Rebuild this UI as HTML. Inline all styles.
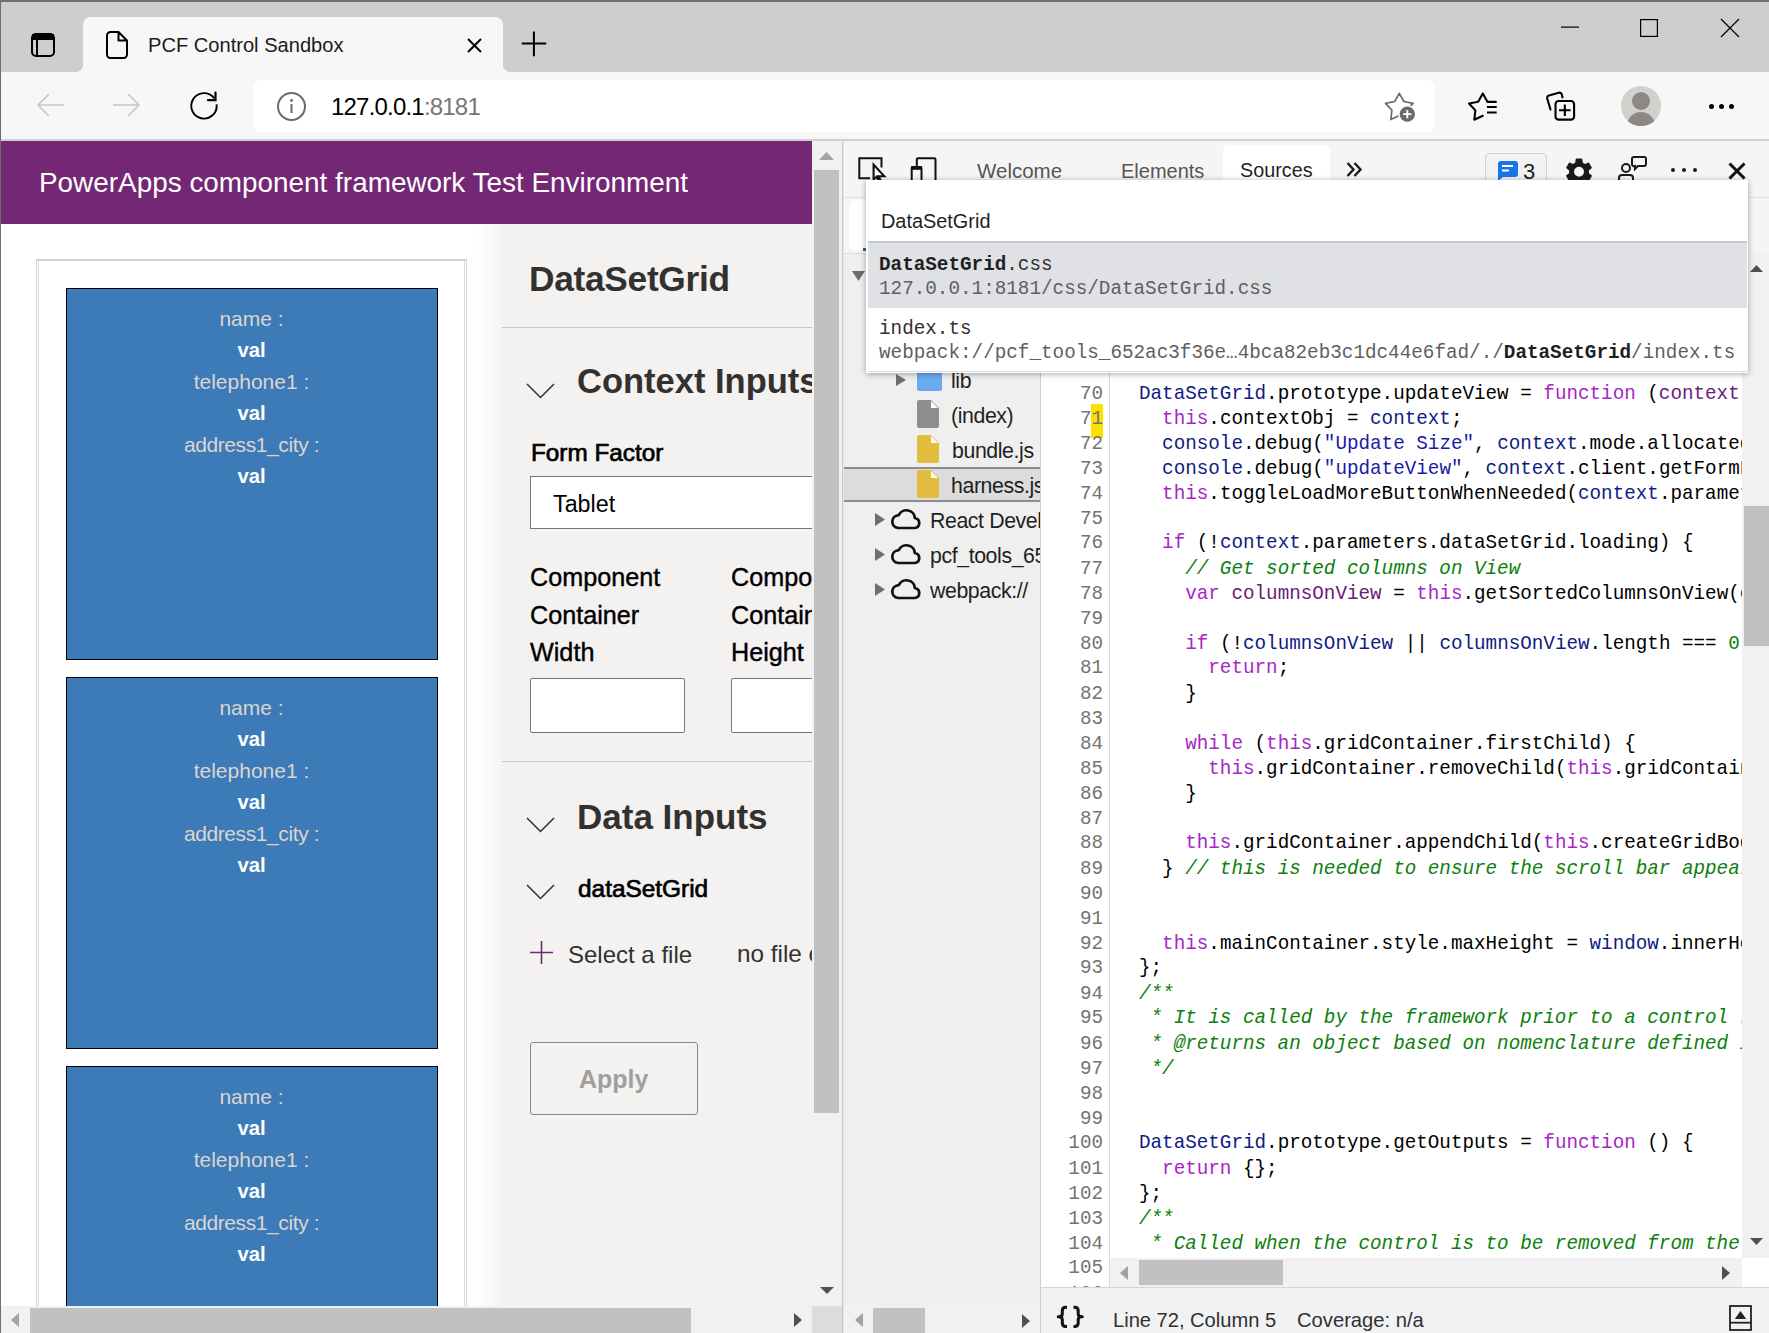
<!DOCTYPE html>
<html><head><meta charset="utf-8">
<style>
*{box-sizing:border-box;margin:0;padding:0}
html,body{width:1769px;height:1333px;overflow:hidden;background:#cecece;font-family:"Liberation Sans",sans-serif}
.a{position:absolute}
.t{position:absolute;white-space:pre;line-height:1}
svg{position:absolute;overflow:visible}
</style></head><body>
<!-- window border -->
<div class="a" style="left:0;top:0;width:1769px;height:2px;background:#6f6f6f;z-index:50"></div>
<div class="a" style="left:0;top:0;width:1px;height:1333px;background:#6f6f6f;z-index:50"></div>

<!-- ===== TAB STRIP ===== -->
<div id="tabstrip" class="a" style="left:0;top:0;width:1769px;height:72px;background:#cecece"></div>
<!-- sidebar icon -->
<svg style="left:31px;top:33px" width="24" height="24" viewBox="0 0 24 24"><rect x="1" y="1" width="22" height="22" rx="4" fill="none" stroke="#000" stroke-width="2"/><rect x="1" y="1" width="22" height="6" fill="#000"/><line x1="6" y1="6" x2="6" y2="23" stroke="#000" stroke-width="2"/></svg>
<!-- active tab -->
<div class="a" style="left:83px;top:17px;width:420px;height:55px;background:#f7f7f7;border-radius:8px 8px 0 0"></div>
<div class="a" style="left:75px;top:64px;width:8px;height:8px;background:radial-gradient(circle at 0 0,transparent 8px,#f7f7f7 8.5px)"></div>
<div class="a" style="left:503px;top:64px;width:8px;height:8px;background:radial-gradient(circle at 100% 0,transparent 8px,#f7f7f7 8.5px)"></div>
<!-- file icon -->
<svg style="left:106px;top:31px" width="22" height="28" viewBox="0 0 22 28"><path d="M4 1 H12.5 L21 9.5 V23.5 A3.5 3.5 0 0 1 17.5 27 H4.5 A3.5 3.5 0 0 1 1 23.5 V4.5 A3.5 3.5 0 0 1 4.5 1 Z M12.5 1 V9.5 H21" fill="none" stroke="#000" stroke-width="2" stroke-linejoin="round"/></svg>
<div class="t" style="left:148px;top:35px;font-size:20.1px;color:#1b1b1b">PCF Control Sandbox</div>
<svg style="left:467px;top:38px" width="15" height="15" viewBox="0 0 15 15"><path d="M1 1 L14 14 M14 1 L1 14" stroke="#000" stroke-width="2"/></svg>
<svg style="left:521px;top:31px" width="26" height="26" viewBox="0 0 26 26"><path d="M12.9 0.5 V25.3 M0.8 12.6 H25.2" stroke="#000" stroke-width="2"/></svg>
<!-- window controls -->
<svg style="left:1561px;top:26px" width="18" height="2"><rect x="0" y="0.5" width="18" height="1.2" fill="#000"/></svg>
<svg style="left:1640px;top:19px" width="18" height="18" viewBox="0 0 18 18"><rect x="0.6" y="0.6" width="16.8" height="16.8" fill="none" stroke="#000" stroke-width="1.2"/></svg>
<svg style="left:1721px;top:19px" width="18" height="18" viewBox="0 0 18 18"><path d="M0 0 L18 18 M18 0 L0 18" stroke="#000" stroke-width="1.2"/></svg>

<!-- ===== TOOLBAR ===== -->
<div class="a" style="left:0;top:72px;width:1769px;height:68px;background:#f7f7f7;border-bottom:1px solid #d2d2d2"></div>
<svg style="left:36px;top:93px" width="28" height="24" viewBox="0 0 28 24"><path d="M13 1 L2 12 L13 23 M2 12 H28" fill="none" stroke="#c6c6c6" stroke-width="1.6"/></svg>
<svg style="left:113px;top:93px" width="28" height="24" viewBox="0 0 28 24"><path d="M15 1 L26 12 L15 23 M26 12 H0" fill="none" stroke="#c6c6c6" stroke-width="1.6"/></svg>
<svg style="left:189px;top:91px" width="30" height="30" viewBox="0 0 30 30"><path d="M25.2 7.3 A12.7 12.7 0 1 0 27.6 13.3" fill="none" stroke="#000" stroke-width="1.9"/><path d="M26.5 1.5 V9.2 H19" fill="none" stroke="#000" stroke-width="2.2" stroke-linecap="round"/></svg>
<div class="a" style="left:253px;top:80px;width:1182px;height:52px;background:#fff;border-radius:7px"></div>
<svg style="left:277px;top:92px" width="29" height="29" viewBox="0 0 29 29"><circle cx="14.5" cy="14.5" r="13.5" fill="none" stroke="#6b6b6b" stroke-width="2"/><rect x="13.5" y="12" width="2" height="9" fill="#6b6b6b"/><circle cx="14.5" cy="8.5" r="1.4" fill="#6b6b6b"/></svg>
<div class="t" style="left:331px;top:95px;font-size:24px;letter-spacing:-0.8px;color:#000">127.0.0.1<span style="color:#767676">:8181</span></div>
<!-- star add -->
<svg style="left:1383px;top:91px" width="34" height="34" viewBox="0 0 34 34"><path d="M16.3 2.3 L20.9 10.5 L30.1 12.3 L23.7 19.2 L24.8 28.5 L16.3 24.6 L7.8 28.5 L8.9 19.2 L2.5 12.3 L11.7 10.5 Z" fill="none" stroke="#6b6b6b" stroke-width="1.7" stroke-linejoin="round"/><circle cx="24.3" cy="23.1" r="9.2" fill="#fff"/><circle cx="24.3" cy="23.1" r="7.7" fill="#6b6b6b"/><path d="M24.3 19 V27.2 M20.2 23.1 H28.4" stroke="#fff" stroke-width="1.9"/></svg>
<!-- favorites -->
<svg style="left:1467px;top:91px" width="32" height="32" viewBox="0 0 32 32"><path d="M20.4 10.7 L15.8 2.5 L11.2 10.7 L2.0 12.5 L8.4 19.4 L7.3 28.7 L15.8 24.8" fill="none" stroke="#000" stroke-width="2.1" stroke-linejoin="round" stroke-linecap="round"/><path d="M20 10.9 H29.7 M20 16 H29.7 M20 21.5 H29.7" stroke="#000" stroke-width="2.1"/></svg>
<!-- collections -->
<svg style="left:1545px;top:91px" width="32" height="32" viewBox="0 0 32 32"><path d="M5.5 18.5 L2.2 7.5 A2.5 2.5 0 0 1 4 4.4 L13.8 1.8 A2.5 2.5 0 0 1 16.8 3.6 L17.5 6.5" fill="none" stroke="#000" stroke-width="2.1" stroke-linecap="round"/><rect x="10.5" y="10" width="18.6" height="18.6" rx="3.2" fill="none" stroke="#000" stroke-width="2.1"/><path d="M19.8 13.5 V25.1 M14 19.3 H25.6" stroke="#000" stroke-width="2.1"/></svg>
<!-- avatar -->
<div class="a" style="left:1621px;top:86px;width:40px;height:40px;border-radius:50%;background:#d3d1ce;overflow:hidden">
 <div class="a" style="left:11px;top:6px;width:18px;height:18px;border-radius:50%;background:#8c8985"></div>
 <div class="a" style="left:6px;top:26px;width:28px;height:20px;border-radius:14px 14px 0 0;background:#8c8985"></div>
</div>
<div class="a" style="left:1709px;top:104px;width:5px;height:5px;border-radius:50%;background:#000"></div>
<div class="a" style="left:1719px;top:104px;width:5px;height:5px;border-radius:50%;background:#000"></div>
<div class="a" style="left:1729px;top:104px;width:5px;height:5px;border-radius:50%;background:#000"></div>

<!-- PAGE_START -->
<div class="a" style="left:1px;top:141px;width:811px;height:1165px;background:#fff;overflow:hidden">
 <div class="a" style="left:0;top:0;width:811px;height:83px;background:#742774"></div>
 <div class="t" style="left:38px;top:28px;font-size:27.9px;color:#fff">PowerApps component framework Test Environment</div>
 <!-- outer container -->
 <div class="a" style="left:35px;top:118px;width:431px;height:1200px;border:1px solid #d4d4d4;border-top-width:2px;border-bottom:0"></div>
 <div class="a" style="left:37px;top:120px;width:427px;height:1200px;border:1px solid #dcdcdc;border-top:0;border-bottom:0"></div>
 <div class="a" style="left:65px;top:147px;width:372px;height:372px;background:#3d7ab8;border:1.5px solid #000;text-align:center;color:#dad6cf;font-size:21px">
  <div class="t" style="left:0;width:369px;top:19px">name :</div>
  <div class="t" style="left:0;width:369px;top:51px;color:#fff;font-weight:700;font-size:20.3px">val</div>
  <div class="t" style="left:0;width:369px;top:82px">telephone1 :</div>
  <div class="t" style="left:0;width:369px;top:114px;color:#fff;font-weight:700;font-size:20.3px">val</div>
  <div class="t" style="left:0;width:369px;top:145px;letter-spacing:-0.4px">address1_city :</div>
  <div class="t" style="left:0;width:369px;top:177px;color:#fff;font-weight:700;font-size:20.3px">val</div>
 </div>
<div class="a" style="left:65px;top:536px;width:372px;height:372px;background:#3d7ab8;border:1.5px solid #000;text-align:center;color:#dad6cf;font-size:21px">
  <div class="t" style="left:0;width:369px;top:19px">name :</div>
  <div class="t" style="left:0;width:369px;top:51px;color:#fff;font-weight:700;font-size:20.3px">val</div>
  <div class="t" style="left:0;width:369px;top:82px">telephone1 :</div>
  <div class="t" style="left:0;width:369px;top:114px;color:#fff;font-weight:700;font-size:20.3px">val</div>
  <div class="t" style="left:0;width:369px;top:145px;letter-spacing:-0.4px">address1_city :</div>
  <div class="t" style="left:0;width:369px;top:177px;color:#fff;font-weight:700;font-size:20.3px">val</div>
 </div>
<div class="a" style="left:65px;top:925px;width:372px;height:372px;background:#3d7ab8;border:1.5px solid #000;text-align:center;color:#dad6cf;font-size:21px">
  <div class="t" style="left:0;width:369px;top:19px">name :</div>
  <div class="t" style="left:0;width:369px;top:51px;color:#fff;font-weight:700;font-size:20.3px">val</div>
  <div class="t" style="left:0;width:369px;top:82px">telephone1 :</div>
  <div class="t" style="left:0;width:369px;top:114px;color:#fff;font-weight:700;font-size:20.3px">val</div>
  <div class="t" style="left:0;width:369px;top:145px;letter-spacing:-0.4px">address1_city :</div>
  <div class="t" style="left:0;width:369px;top:177px;color:#fff;font-weight:700;font-size:20.3px">val</div>
 </div>
<div class="a" style="left:65px;top:1313px;width:372px;height:372px;background:#3d7ab8;border:1.5px solid #000;text-align:center;color:#dad6cf;font-size:21px">
  <div class="t" style="left:0;width:369px;top:19px">name :</div>
  <div class="t" style="left:0;width:369px;top:51px;color:#fff;font-weight:700;font-size:20.3px">val</div>
  <div class="t" style="left:0;width:369px;top:82px">telephone1 :</div>
  <div class="t" style="left:0;width:369px;top:114px;color:#fff;font-weight:700;font-size:20.3px">val</div>
  <div class="t" style="left:0;width:369px;top:145px;letter-spacing:-0.4px">address1_city :</div>
  <div class="t" style="left:0;width:369px;top:177px;color:#fff;font-weight:700;font-size:20.3px">val</div>
 </div>

 <!-- right panel -->
 <div class="a" style="left:473px;top:83px;width:29px;height:1082px;background:linear-gradient(to right,rgba(0,0,0,0),rgba(0,0,0,0.045))"></div>
 <div class="a" style="left:501px;top:83px;width:310px;height:1082px;background:#f3f2f1"></div>
 <div class="t" style="left:528px;top:120px;font-size:35.3px;font-weight:700;color:#323130;letter-spacing:-0.3px">DataSetGrid</div>
 <div class="a" style="left:501px;top:186px;width:310px;height:1px;background:#c8c6c4"></div>
 <svg style="left:525px;top:242px" width="29" height="16" viewBox="0 0 29 16"><path d="M1 1 L14.5 14.5 L28 1" fill="none" stroke="#323130" stroke-width="1.5"/></svg>
 <div class="t" style="left:576px;top:223px;font-size:34.5px;font-weight:700;color:#323130">Context Inputs</div>
 <div class="t" style="left:530px;top:300px;font-size:24.3px;color:#000;-webkit-text-stroke:0.7px #000">Form Factor</div>
 <div class="a" style="left:529px;top:335px;width:300px;height:53px;background:#fff;border:1px solid #767676"></div>
 <div class="t" style="left:552px;top:352px;font-size:23.3px;color:#000">Tablet</div>
 <div class="a" style="left:529px;top:418px;font-size:25.2px;line-height:37.7px;color:#000;white-space:pre;-webkit-text-stroke:0.4px #000">Component
Container
Width</div>
 <div class="a" style="left:730px;top:418px;font-size:25.2px;line-height:37.7px;color:#000;white-space:pre;-webkit-text-stroke:0.4px #000">Component
Container
Height</div>
 <div class="a" style="left:529px;top:537px;width:155px;height:55px;background:#fff;border:1px solid #767676;border-radius:2px"></div>
 <div class="a" style="left:730px;top:537px;width:155px;height:55px;background:#fff;border:1px solid #767676;border-radius:2px"></div>
 <div class="a" style="left:501px;top:620px;width:310px;height:1px;background:#c8c6c4"></div>
 <svg style="left:525px;top:676px" width="29" height="16" viewBox="0 0 29 16"><path d="M1 1 L14.5 14.5 L28 1" fill="none" stroke="#323130" stroke-width="1.5"/></svg>
 <div class="t" style="left:576px;top:658px;font-size:35px;font-weight:700;color:#323130">Data Inputs</div>
 <svg style="left:525px;top:743px" width="29" height="16" viewBox="0 0 29 16"><path d="M1 1 L14.5 14.5 L28 1" fill="none" stroke="#323130" stroke-width="1.5"/></svg>
 <div class="t" style="left:577px;top:736px;font-size:24.4px;color:#000;-webkit-text-stroke:0.7px #000">dataSetGrid</div>
 <svg style="left:529px;top:800px" width="23" height="23" viewBox="0 0 23 23"><path d="M11.5 0 V23 M0 11.5 H23" stroke="#742774" stroke-width="1.6"/></svg>
 <div class="t" style="left:567px;top:802px;font-size:24px;color:#323130">Select a file</div>
 <div class="t" style="left:736px;top:801px;font-size:24.3px;color:#323130">no file chosen</div>
 <div class="a" style="left:529px;top:901px;width:168px;height:73px;border:1.5px solid #8a8886;border-radius:3px"></div>
 <div class="t" style="left:578px;top:926px;font-size:25px;font-weight:700;color:#a19f9d">Apply</div>
</div>
<!-- page v scrollbar -->
<div class="a" style="left:812px;top:141px;width:30px;height:1165px;background:#f1f1f1"></div>
<div class="a" style="left:814px;top:170px;width:25px;height:943px;background:#c1c1c1"></div>
<svg style="left:819px;top:152px" width="15" height="8" viewBox="0 0 15 8"><path d="M0 8 L7.5 0 L15 8 Z" fill="#a3a3a3"/></svg>
<svg style="left:820px;top:1287px" width="14" height="7" viewBox="0 0 14 7"><path d="M0 0 L7 7 L14 0 Z" fill="#505050"/></svg>
<!-- page h scrollbar -->
<div class="a" style="left:1px;top:1306px;width:811px;height:27px;background:#f1f1f1"></div>
<div class="a" style="left:30px;top:1308px;width:661px;height:25px;background:#c1c1c1"></div>
<svg style="left:11px;top:1313px" width="8" height="14" viewBox="0 0 8 14"><path d="M8 0 L0 7 L8 14 Z" fill="#a3a3a3"/></svg>
<svg style="left:794px;top:1313px" width="8" height="14" viewBox="0 0 8 14"><path d="M0 0 L8 7 L0 14 Z" fill="#505050"/></svg>
<div class="a" style="left:812px;top:1306px;width:30px;height:27px;background:#dcdcdc"></div>
<!-- PAGE_END -->

<!-- DEVTOOLS_START -->
<style>
.cl{height:23.585px;line-height:23.585px;white-space:pre}
.code{font-family:"Liberation Mono",monospace;font-size:19.25px}
.k{color:#a626c8} .v{color:#0e1c84} .d{color:#6c1a78} .s{color:#1a1aa6} .c{color:#0b800b;font-style:italic} .n{color:#0b7d0b} .p{color:#000}
.nv{font-family:"Liberation Sans",sans-serif;font-size:21.3px;color:#1f1f1f;letter-spacing:-0.4px}
</style>
<div class="a" style="left:842px;top:141px;width:927px;height:1192px;background:#f5f5f5"></div>
<div class="a" style="left:842px;top:141px;width:1px;height:1192px;background:#c4c7cc"></div><div class="a" style="left:843px;top:141px;width:1px;height:1192px;background:#e6e6e6"></div>
<!-- main toolbar -->
<div class="a" style="left:844px;top:197px;width:925px;height:1px;background:#e2e2e2"></div>
<div class="a" style="left:1223px;top:145px;width:107px;height:52px;background:#fff;border-radius:6px 6px 0 0"></div>
<svg style="left:857px;top:156px" width="30" height="30" viewBox="0 0 30 30"><path d="M13 22.3 H2.3 V2.3 H24.5 V11.5" fill="none" stroke="#111" stroke-width="2"/><path d="M16.6 8.6 V23.5 L19.6 20.8 L21.8 25.2 L23.6 24.3 L21.5 20.2 L27.3 20.2 Z" fill="#fff" stroke="#111" stroke-width="2.1" stroke-miterlimit="10"/></svg>
<svg style="left:909px;top:156px" width="30" height="30" viewBox="0 0 30 30"><path d="M7.8 10 V3.5 Q7.8 2.3 9 2.3 H25.3 Q26.5 2.3 26.5 3.5 V26" fill="none" stroke="#111" stroke-width="2"/><path d="M2.7 26 V12.3 Q2.7 11.1 3.9 11.1 H11.3 Q12.5 11.1 12.5 12.3 V26" fill="none" stroke="#111" stroke-width="2"/><rect x="2" y="10.3" width="11" height="3.5" fill="#111"/></svg>
<div class="t" style="left:977px;top:161px;font-size:20.5px;color:#555">Welcome</div>
<div class="t" style="left:1121px;top:161px;font-size:20px;color:#555">Elements</div>
<div class="t" style="left:1240px;top:161px;font-size:19.8px;color:#1f1f1f">Sources</div>
<svg style="left:1346px;top:162px" width="16" height="15" viewBox="0 0 16 15"><path d="M1.5 1 L7.5 7.5 L1.5 14 M8.5 1 L14.5 7.5 L8.5 14" fill="none" stroke="#1a1a1a" stroke-width="2.4"/></svg>
<div class="a" style="left:1485px;top:153px;width:62px;height:50px;background:#f1f2f4;border:1px solid #d2d2d6;border-radius:4px"></div>
<svg style="left:1498px;top:161px" width="20" height="20" viewBox="0 0 20 20"><path d="M3 0 H17 A3 3 0 0 1 20 3 V13 A3 3 0 0 1 17 16 H5 L0 20 V3 A3 3 0 0 1 3 0 Z" fill="#1a73e8"/><rect x="4" y="4" width="11" height="2" fill="#fff"/><rect x="4" y="8.5" width="7" height="2" fill="#fff"/></svg>
<div class="t" style="left:1523px;top:161px;font-size:22px;color:#222">3</div>
<svg style="left:1566px;top:158px" width="26" height="27" viewBox="2.6 2 18.8 19.5"><path fill="#1a1a1a" d="M19.14 12.94c.04-.3.06-.61.06-.94 0-.32-.02-.64-.07-.94l2.03-1.58a.49.49 0 0 0 .12-.61l-1.92-3.32a.49.49 0 0 0-.59-.22l-2.39.96c-.5-.38-1.03-.7-1.62-.94l-.36-2.54a.48.48 0 0 0-.48-.41h-3.84c-.24 0-.43.17-.47.41l-.36 2.54c-.59.24-1.13.57-1.62.94l-2.39-.96a.49.49 0 0 0-.59.22L2.74 8.87c-.12.21-.08.47.12.61l2.03 1.58c-.05.3-.09.63-.09.94s.02.64.07.94l-2.03 1.58a.49.49 0 0 0-.12.61l1.92 3.32c.12.22.37.29.59.22l2.39-.96c.5.38 1.03.7 1.62.94l.36 2.54c.05.24.24.41.48.41h3.84c.24 0 .44-.17.47-.41l.36-2.54c.59-.24 1.13-.56 1.62-.94l2.39.96c.22.08.47 0 .59-.22l1.92-3.32c.12-.22.07-.47-.12-.61l-2.01-1.58zM12 15.6A3.6 3.6 0 1 1 12 8.4a3.6 3.6 0 0 1 0 7.2z"/></svg>
<svg style="left:1618px;top:156px" width="29" height="28" viewBox="0 0 29 28"><circle cx="8" cy="12" r="4" fill="none" stroke="#1a1a1a" stroke-width="2"/><path d="M1 27 V22 A3 3 0 0 1 4 19 H12 A3 3 0 0 1 15 22 V27" fill="none" stroke="#1a1a1a" stroke-width="2"/><path d="M16 1 H26 A2 2 0 0 1 28 3 V8 A2 2 0 0 1 26 10 H20 L17 13 V10 A2 2 0 0 1 14 8 V3 A2 2 0 0 1 16 1 Z" fill="none" stroke="#1a1a1a" stroke-width="2"/></svg>
<div class="a" style="left:1670.5px;top:167.7px;width:4.4px;height:4.4px;border-radius:50%;background:#1a1a1a"></div>
<div class="a" style="left:1681.6px;top:167.7px;width:4.4px;height:4.4px;border-radius:50%;background:#1a1a1a"></div>
<div class="a" style="left:1692.8px;top:167.7px;width:4.4px;height:4.4px;border-radius:50%;background:#1a1a1a"></div>
<svg style="left:1728px;top:163px" width="18" height="16" viewBox="0 0 18 16"><path d="M1.5 0.5 L16.5 15.5 M16.5 0.5 L1.5 15.5" stroke="#111" stroke-width="3"/></svg>
<!-- second toolbar -->
<div class="a" style="left:844px;top:253px;width:925px;height:1px;background:#dcdcdc"></div>
<div class="a" style="left:849px;top:200px;width:60px;height:50px;background:#fff;border-radius:6px"></div>
<div class="a" style="left:863px;top:248px;width:40px;height:3px;background:#0f6cbd"></div>
<!-- navigator -->
<div class="a" style="left:844px;top:254px;width:196px;height:1051px;background:#efefef"></div>
<div class="a" style="left:1040px;top:253px;width:1px;height:1080px;background:#d0d0d0"></div>
<svg style="left:852px;top:271px" width="13" height="10" viewBox="0 0 13 10"><path d="M0 0 H13 L6.5 10 Z" fill="#6e6e6e"/></svg>
<div class="a" style="left:844px;top:467px;width:196px;height:35px;background:#dcdcdc;border-top:2px solid #8d8d8d;border-bottom:2px solid #8d8d8d"></div>
<svg style="left:896px;top:374px" width="10" height="12" viewBox="0 0 10 12"><path d="M0 0 L10 6 L0 12 Z" fill="#6e6e6e"/></svg>
<div class="a" style="left:917px;top:370px;width:25px;height:21px;background:#6aaaf0;border-radius:2px"></div>
<div class="t nv" style="left:951px;top:371px">lib</div>
<svg style="left:917px;top:400px" width="22" height="28" viewBox="0 0 22 28"><path d="M2 0 H14 L22 8 V26 A2 2 0 0 1 20 28 H2 A2 2 0 0 1 0 26 V2 A2 2 0 0 1 2 0 Z" fill="#8e8e8e"/><path d="M14 1 L21 8 H14 Z" fill="#fff"/></svg>
<div class="t nv" style="left:951px;top:406px">(index)</div>
<svg style="left:917px;top:435px" width="22" height="28" viewBox="0 0 22 28"><path d="M2 0 H14 L22 8 V26 A2 2 0 0 1 20 28 H2 A2 2 0 0 1 0 26 V2 A2 2 0 0 1 2 0 Z" fill="#e3bd3d"/><path d="M14 1 L21 8 H14 Z" fill="#fff"/></svg>
<div class="t nv" style="left:952px;top:441px">bundle.js</div>
<svg style="left:917px;top:470px" width="22" height="28" viewBox="0 0 22 28"><path d="M2 0 H14 L22 8 V26 A2 2 0 0 1 20 28 H2 A2 2 0 0 1 0 26 V2 A2 2 0 0 1 2 0 Z" fill="#e3bd3d"/><path d="M14 1 L21 8 H14 Z" fill="#fff"/></svg>
<div class="a" style="left:951px;top:467px;width:89px;height:35px;overflow:hidden"><div class="t nv" style="left:0;top:9px">harness.js</div></div>
<svg style="left:875px;top:513px" width="10" height="13" viewBox="0 0 10 13"><path d="M0 0 L10 6.5 L0 13 Z" fill="#6e6e6e"/></svg>
<svg style="left:889px;top:508px" width="35" height="22" viewBox="0 0 33 22" preserveAspectRatio="none"><path d="M8.5 20 H24.5 A5.1 5.1 0 0 0 24.3 10 A7.8 7.8 0 0 0 9.3 7.1 A6.5 6.5 0 0 0 8.5 20 Z" fill="none" stroke="#111" stroke-width="2.6" stroke-linejoin="round"/></svg>
<div class="a" style="left:930px;top:503px;width:110px;height:35px;overflow:hidden"><div class="t nv" style="left:0;top:8px">React Developer Tools</div></div>
<svg style="left:875px;top:548px" width="10" height="13" viewBox="0 0 10 13"><path d="M0 0 L10 6.5 L0 13 Z" fill="#6e6e6e"/></svg>
<svg style="left:889px;top:543px" width="35" height="22" viewBox="0 0 33 22" preserveAspectRatio="none"><path d="M8.5 20 H24.5 A5.1 5.1 0 0 0 24.3 10 A7.8 7.8 0 0 0 9.3 7.1 A6.5 6.5 0 0 0 8.5 20 Z" fill="none" stroke="#111" stroke-width="2.6" stroke-linejoin="round"/></svg>
<div class="a" style="left:930px;top:538px;width:110px;height:35px;overflow:hidden"><div class="t nv" style="left:0;top:8px">pcf_tools_652ac3f36e</div></div>
<svg style="left:875px;top:583px" width="10" height="13" viewBox="0 0 10 13"><path d="M0 0 L10 6.5 L0 13 Z" fill="#6e6e6e"/></svg>
<svg style="left:889px;top:578px" width="35" height="22" viewBox="0 0 33 22" preserveAspectRatio="none"><path d="M8.5 20 H24.5 A5.1 5.1 0 0 0 24.3 10 A7.8 7.8 0 0 0 9.3 7.1 A6.5 6.5 0 0 0 8.5 20 Z" fill="none" stroke="#111" stroke-width="2.6" stroke-linejoin="round"/></svg>
<div class="a" style="left:930px;top:573px;width:110px;height:35px;overflow:hidden"><div class="t nv" style="left:0;top:8px">webpack://</div></div>

<!-- navigator h scrollbar -->
<div class="a" style="left:844px;top:1305px;width:196px;height:28px;background:#f1f1f1"></div>
<div class="a" style="left:873px;top:1308px;width:52px;height:25px;background:#c1c1c1"></div>
<svg style="left:855px;top:1313px" width="8" height="14" viewBox="0 0 8 14"><path d="M8 0 L0 7 L8 14 Z" fill="#a3a3a3"/></svg>
<svg style="left:1022px;top:1314px" width="8" height="14" viewBox="0 0 8 14"><path d="M0 0 L8 7 L0 14 Z" fill="#505050"/></svg>
<!-- editor -->
<div class="a" style="left:1041px;top:253px;width:701px;height:1034px;background:#fff;overflow:hidden">
 <div class="a" style="left:68px;top:0;width:1px;height:1034px;background:#dadada"></div>
 <div class="a" style="left:50px;top:151px;width:12px;height:34px;background:#ffe100"></div>
 <div class="a code" style="left:0;top:129px;width:62px;text-align:right;color:#737373;transform:scaleY(1.06);transform-origin:0 0"><div class="cl">70</div><div class="cl">71</div><div class="cl">72</div><div class="cl">73</div><div class="cl">74</div><div class="cl">75</div><div class="cl">76</div><div class="cl">77</div><div class="cl">78</div><div class="cl">79</div><div class="cl">80</div><div class="cl">81</div><div class="cl">82</div><div class="cl">83</div><div class="cl">84</div><div class="cl">85</div><div class="cl">86</div><div class="cl">87</div><div class="cl">88</div><div class="cl">89</div><div class="cl">90</div><div class="cl">91</div><div class="cl">92</div><div class="cl">93</div><div class="cl">94</div><div class="cl">95</div><div class="cl">96</div><div class="cl">97</div><div class="cl">98</div><div class="cl">99</div><div class="cl">100</div><div class="cl">101</div><div class="cl">102</div><div class="cl">103</div><div class="cl">104</div><div class="cl">105</div><div class="cl">106</div></div>
 <div class="a code" style="left:98px;top:129px;width:700px;transform:scaleY(1.06);transform-origin:0 0"><div class="cl"><span class="v">DataSetGrid</span><span class="p">.prototype.updateView = </span><span class="k">function</span><span class="p"> (</span><span class="d">context</span><span class="p">) {</span></div><div class="cl"><span class="p">  </span><span class="k">this</span><span class="p">.contextObj = </span><span class="v">context</span><span class="p">;</span></div><div class="cl"><span class="p">  </span><span class="v">console</span><span class="p">.debug(</span><span class="s">"Update Size"</span><span class="p">, </span><span class="v">context</span><span class="p">.mode.allocatedWidth, </span><span class="v">context</span><span class="p">.mode.allocatedHeight);</span></div><div class="cl"><span class="p">  </span><span class="v">console</span><span class="p">.debug(</span><span class="s">"updateView"</span><span class="p">, </span><span class="v">context</span><span class="p">.client.getFormFactor());</span></div><div class="cl"><span class="p">  </span><span class="k">this</span><span class="p">.toggleLoadMoreButtonWhenNeeded(</span><span class="v">context</span><span class="p">.parameters.dataSetGrid);</span></div><div class="cl"></div><div class="cl"><span class="p">  </span><span class="k">if</span><span class="p"> (!</span><span class="v">context</span><span class="p">.parameters.dataSetGrid.loading) {</span></div><div class="cl"><span class="p">    </span><span class="c">// Get sorted columns on View</span></div><div class="cl"><span class="p">    </span><span class="k">var</span><span class="p"> </span><span class="d">columnsOnView</span><span class="p"> = </span><span class="k">this</span><span class="p">.getSortedColumnsOnView(</span><span class="v">context</span><span class="p">);</span></div><div class="cl"></div><div class="cl"><span class="p">    </span><span class="k">if</span><span class="p"> (!</span><span class="v">columnsOnView</span><span class="p"> || </span><span class="v">columnsOnView</span><span class="p">.length === </span><span class="n">0</span><span class="p">) {</span></div><div class="cl"><span class="p">      </span><span class="k">return</span><span class="p">;</span></div><div class="cl"><span class="p">    }</span></div><div class="cl"></div><div class="cl"><span class="p">    </span><span class="k">while</span><span class="p"> (</span><span class="k">this</span><span class="p">.gridContainer.firstChild) {</span></div><div class="cl"><span class="p">      </span><span class="k">this</span><span class="p">.gridContainer.removeChild(</span><span class="k">this</span><span class="p">.gridContainer.firstChild);</span></div><div class="cl"><span class="p">    }</span></div><div class="cl"></div><div class="cl"><span class="p">    </span><span class="k">this</span><span class="p">.gridContainer.appendChild(</span><span class="k">this</span><span class="p">.createGridBody(columnsOnView));</span></div><div class="cl"><span class="p">  } </span><span class="c">// this is needed to ensure the scroll bar appears automatically</span></div><div class="cl"></div><div class="cl"></div><div class="cl"><span class="p">  </span><span class="k">this</span><span class="p">.mainContainer.style.maxHeight = </span><span class="v">window</span><span class="p">.innerHeight - this.mainContainer.offsetTop</span></div><div class="cl"><span class="p">};</span></div><div class="cl"><span class="c">/**</span></div><div class="cl"><span class="c"> * It is called by the framework prior to a control receiving new data.</span></div><div class="cl"><span class="c"> * @returns an object based on nomenclature defined in manifest</span></div><div class="cl"><span class="c"> */</span></div><div class="cl"></div><div class="cl"></div><div class="cl"><span class="v">DataSetGrid</span><span class="p">.prototype.getOutputs = </span><span class="k">function</span><span class="p"> () {</span></div><div class="cl"><span class="p">  </span><span class="k">return</span><span class="p"> {};</span></div><div class="cl"><span class="p">};</span></div><div class="cl"><span class="c">/**</span></div><div class="cl"><span class="c"> * Called when the control is to be removed from the DOM tree.</span></div><div class="cl"></div><div class="cl"><span class="p">  </span></div></div>
</div>
<!-- editor v scrollbar -->
<div class="a" style="left:1742px;top:253px;width:27px;height:1005px;background:#f1f1f1"></div>
<div class="a" style="left:1744px;top:506px;width:25px;height:140px;background:#c1c1c1"></div>
<svg style="left:1750px;top:265px" width="13" height="7" viewBox="0 0 13 7"><path d="M0 7 L6.5 0 L13 7 Z" fill="#505050"/></svg>
<svg style="left:1750px;top:1238px" width="13" height="7" viewBox="0 0 13 7"><path d="M0 0 L6.5 7 L13 0 Z" fill="#505050"/></svg>
<!-- editor h scrollbar -->
<div class="a" style="left:1110px;top:1258px;width:632px;height:29px;background:#f1f1f1"></div>
<div class="a" style="left:1139px;top:1260px;width:144px;height:25px;background:#c1c1c1"></div>
<svg style="left:1120px;top:1266px" width="8" height="14" viewBox="0 0 8 14"><path d="M8 0 L0 7 L8 14 Z" fill="#a3a3a3"/></svg>
<svg style="left:1722px;top:1266px" width="8" height="14" viewBox="0 0 8 14"><path d="M0 0 L8 7 L0 14 Z" fill="#505050"/></svg>
<div class="a" style="left:1742px;top:1258px;width:27px;height:29px;background:#fff"></div>
<!-- status bar -->
<div class="a" style="left:1041px;top:1287px;width:728px;height:46px;background:#f1f2f4;border-top:1px solid #d4d6da"></div>
<svg style="left:1057px;top:1306px" width="27" height="22" viewBox="0 0 27 22"><path d="M10 1.3 H8.8 Q5.3 1.3 5.3 4.8 V8 Q5.3 10.8 1.2 10.8 Q5.3 10.8 5.3 13.6 V17 Q5.3 20.5 8.8 20.5 H10 M16.5 1.3 H17.7 Q21.2 1.3 21.2 4.8 V8 Q21.2 10.8 25.3 10.8 Q21.2 10.8 21.2 13.6 V17 Q21.2 20.5 17.7 20.5 H16.5" fill="none" stroke="#111" stroke-width="3" stroke-linejoin="round"/></svg>
<div class="t" style="left:1113px;top:1310px;font-size:20.1px;color:#303030">Line 72, Column 5</div>
<div class="t" style="left:1297px;top:1310px;font-size:20.2px;color:#303030">Coverage: n/a</div>
<svg style="left:1729px;top:1305px" width="23" height="26" viewBox="0 0 23 26"><rect x="1" y="1" width="21" height="24" fill="none" stroke="#222" stroke-width="1.8"/><line x1="1" y1="17.7" x2="22" y2="17.7" stroke="#222" stroke-width="1.8"/><path d="M5.8 14 L11.5 6 L17.2 14 Z" fill="#222"/></svg>
<!-- quick open dialog -->
<div class="a" style="left:866px;top:180px;width:882px;height:193px;background:#fff;box-shadow:0 1px 6px rgba(0,0,0,0.35)">
 <div class="t" style="left:15px;top:32px;font-size:19.9px;color:#1f1f1f">DataSetGrid</div>
 <div class="a" style="left:2px;top:61px;width:879px;height:67px;background:#dfe1e5;border-top:2.5px solid #c8c8c8"></div>
 <div class="a" style="left:2px;top:191px;width:880px;height:1px;background:#d9dde2"></div>
 <div class="a code" style="left:13px;top:73px;font-size:19.3px;color:#303030;line-height:24px;white-space:pre"><b style="color:#1f1f1f">DataSetGrid</b>.css
<span style="color:#5f5f5f">127.0.0.1:8181/css/DataSetGrid.css</span></div>
 <div class="a code" style="left:13px;top:137px;font-size:19.3px;color:#303030;line-height:24px;white-space:pre">index.ts
<span style="color:#5f5f5f">webpack://pcf_tools_652ac3f36e…4bca82eb3c1dc44e6fad/./<b style="color:#1f1f1f">DataSetGrid</b>/index.ts</span></div>
</div>
<!-- DEVTOOLS_END -->
</body></html>
